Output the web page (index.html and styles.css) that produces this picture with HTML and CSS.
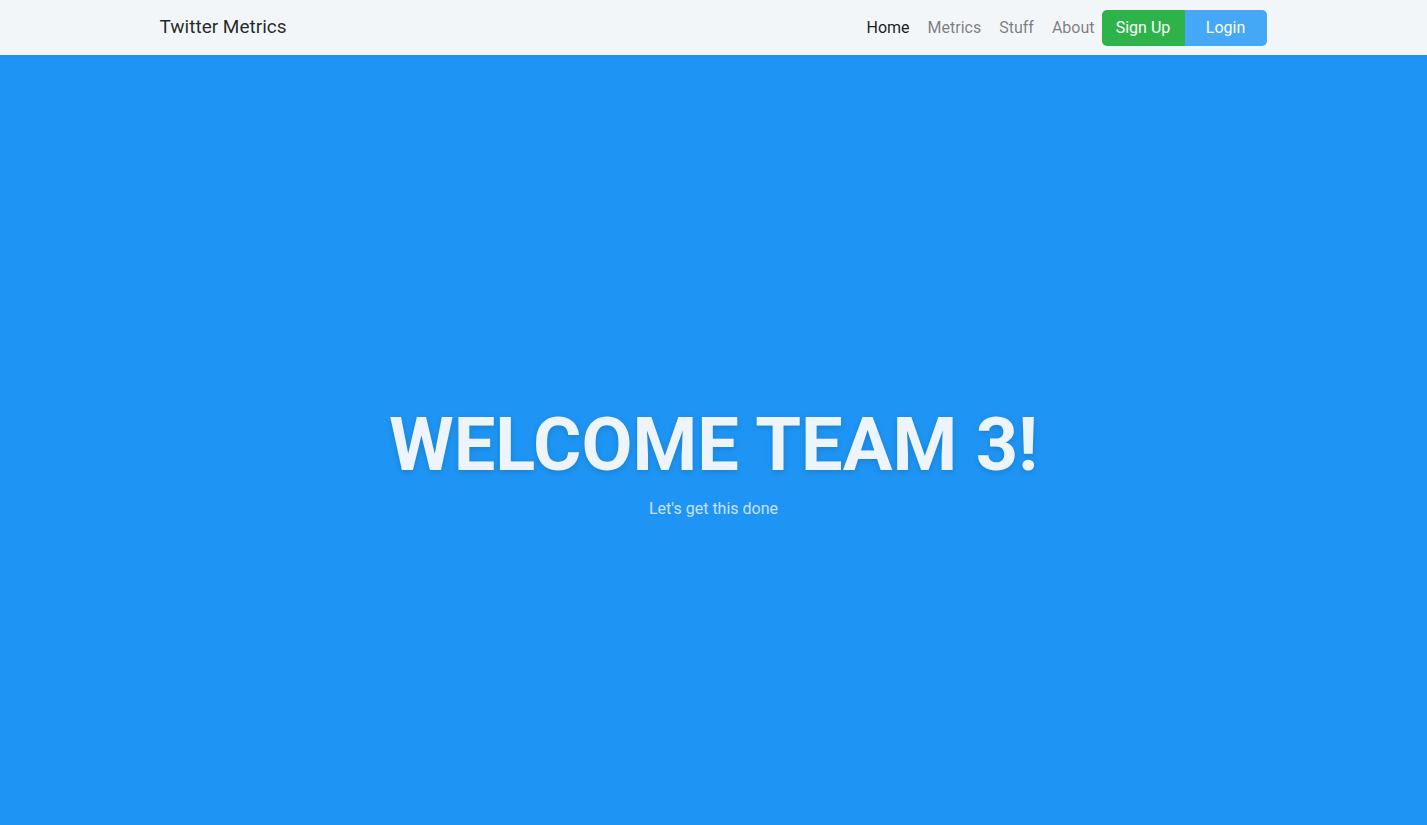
FILE: index.html
```html
<!DOCTYPE html>
<html lang="en">
<head>
<meta charset="utf-8">
<title>Twitter Metrics</title>
<link rel="stylesheet" href="styles.css">
</head>
<body>
<nav class="navbar">
  <div class="container nav-inner">
    <a class="brand" href="#">Twitter Metrics</a>
    <div class="nav-right">
      <ul class="nav-links">
        <li><a class="nav-link active" href="#">Home</a></li>
        <li><a class="nav-link" href="#">Metrics</a></li>
        <li><a class="nav-link" href="#">Stuff</a></li>
        <li><a class="nav-link" href="#">About</a></li>
      </ul>
      <div class="btn-group">
        <a class="btn btn-signup" href="#">Sign Up</a>
        <a class="btn btn-login" href="#">Login</a>
      </div>
    </div>
  </div>
</nav>
<main class="hero">
  <h1 class="hero-title">WELCOME TEAM 3!</h1>
  <p class="hero-sub">Let's get this done</p>
</main>
</body>
</html>
```
FILE: styles.css
```css
* { box-sizing: border-box; }
html, body { height: 100%; }
body {
  margin: 0;
  font-family: Roboto, "Helvetica Neue", Arial, sans-serif;
  font-size: 16px;
  line-height: 1.5;
  color: #212529;
  display: flex;
  flex-direction: column;
  background: #1e95f4;
}
a { text-decoration: none; }
.navbar {
  background: #f3f6f9;
  padding: 8px 0;
  flex: 0 0 auto;
  box-shadow: 0 1px 4px rgba(0,0,0,0.06);
  position: relative;
  z-index: 1;
}
.container {
  width: 1140px;
  margin: 0 auto;
  padding: 0 15px;
}
.nav-inner {
  display: flex;
  align-items: center;
  justify-content: space-between;
  height: 39px;
}
.brand {
  font-size: 19px;
  color: rgba(0,0,0,0.85);
  padding: 5px 0;
  margin-left: 1px;
}
.nav-right {
  display: flex;
  align-items: center;
  margin-right: 2px;
}
.nav-links {
  list-style: none;
  margin: 0;
  padding: 0;
  display: flex;
}
.nav-link {
  display: block;
  padding: 8px 9px;
  color: rgba(0,0,0,0.5);
  font-size: 16px;
}
.nav-link.active { color: rgba(0,0,0,0.9); }
.btn-group { display: flex; margin-left: -2px; }
.btn {
  display: inline-block;
  padding: 6px 0;
  font-size: 16px;
  line-height: 24px;
  color: #fff;
  width: 83px;
  text-align: center;
}
.btn-signup {
  background: #2db34a;
  border-radius: 5px 0 0 5px;
}
.btn-login {
  background: #45a8f6;
  border-radius: 0 5px 5px 0;
  width: 82px;
}
.hero {
  flex: 1 1 auto;
  background: #1e95f4;
  display: flex;
  flex-direction: column;
  align-items: center;
  justify-content: center;
  color: #fff;
  padding-top: 42px;
}
.hero-title {
  margin: 0;
  font-size: 74px;
  font-weight: 700;
  line-height: 1.2;
  color: #eef4fb;
  text-shadow: 0 2px 6px rgba(0,0,0,0.15);
}
.hero-sub {
  margin: 7px 0 0;
  font-size: 16px;
  color: rgba(255,255,255,0.75);
}
```
